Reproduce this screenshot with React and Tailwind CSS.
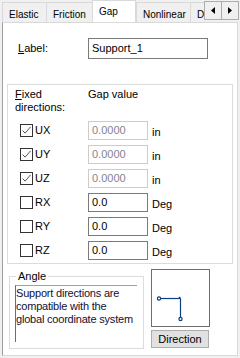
import React from 'react';

const rows = [
  { name: 'UX', checked: true, value: '0.0000', unit: 'in' },
  { name: 'UY', checked: true, value: '0.0000', unit: 'in' },
  { name: 'UZ', checked: true, value: '0.0000', unit: 'in' },
  { name: 'RX', checked: false, value: '0.0', unit: 'Deg' },
  { name: 'RY', checked: false, value: '0.0', unit: 'Deg' },
  { name: 'RZ', checked: false, value: '0.0', unit: 'Deg' },
];

function CheckBox({ checked }) {
  return (
    <div className="w-[13px] h-[13px] border border-[#333333] bg-white shrink-0">
      {checked && (
        <svg width="11" height="11" viewBox="0 0 11 11">
          <polyline points="1.5,5.5 4.2,8.2 9.5,1.8" fill="none" stroke="#555555" strokeWidth="1" />
        </svg>
      )}
    </div>
  );
}

function Tab({ label, width, active }) {
  if (active) {
    return (
      <div className={`${width} h-[23px] -mb-px relative z-10 bg-white border-t border-l border-r border-[#d9d9d9] pl-[6px] pt-[4px] text-[10px] leading-[13px] text-black`}>
        {label}
      </div>
    );
  }
  return (
    <div className={`${width} h-[20px] bg-[#f0f0f0] border-t border-l border-[#d9d9d9] pl-[6px] flex items-end text-[10px] leading-[14px] text-black shrink-0`}>
      {label}
    </div>
  );
}

export default function App() {
  return (
    <div className="w-[240px] h-[358px] bg-[#f0f0f0] overflow-hidden font-['Liberation_Sans',Arial,sans-serif] text-[11px] text-black">
      {/* Tab strip */}
      <div className="flex h-[22px] items-end">
        <div className="flex items-end flex-1 overflow-hidden pl-[2px] h-[22px]">
          <Tab label="Elastic" width="w-[44px]" />
          <Tab label="Friction" width="w-[46px]" />
          <Tab label="Gap" width="w-[44px] shrink-0" active />
          <Tab label="Nonlinear" width="w-[54px]" />
          <Tab label="D" width="w-[16px]" />
        </div>
        <div className="flex self-start mt-[1px] shrink-0 w-[35px] h-[19px] border border-[#adadad] bg-[#f0f0f0] mr-[1px]">
          <div className="w-1/2 flex items-center justify-center border-r border-[#adadad]">
            <svg width="4" height="7" viewBox="0 0 4 7"><polygon points="4,0 4,7 0,3.5" fill="#000" /></svg>
          </div>
          <div className="w-1/2 flex items-center justify-center">
            <svg width="4" height="7" viewBox="0 0 4 7"><polygon points="0,0 0,7 4,3.5" fill="#000" /></svg>
          </div>
        </div>
      </div>

      {/* Panel */}
      <div className="ml-[2px] w-[236px] h-[334px] bg-white border border-[#d9d9d9] border-l-[#a0a0a0]">
        {/* Label */}
        <div className="flex items-center mt-[15px]">
          <div className="w-[85px] pl-[15px]">
            <span className="underline">L</span>abel:
          </div>
          <div className="w-[120px] h-[21px] border border-[#7a7a7a] flex items-center pl-[3px]">Support_1</div>
        </div>

        {/* Fixed directions */}
        <div className="mt-[25px] ml-[4px] w-[226px] border border-[#dcdcdc] pt-[3px] pb-[3px]">
          <div className="flex leading-[13px]">
            <div className="w-[80px] pl-[7px]">
              <span className="underline">F</span>ixed<br />directions:
            </div>
            <div>Gap value</div>
          </div>
          <div className="mt-[7px] flex flex-col gap-[5px]">
            {rows.map((r) => (
              <div key={r.name} className="flex items-center h-[19px]">
                <div className="w-[80px] pl-[12px] flex items-center">
                  <CheckBox checked={r.checked} />
                  <span className="ml-[2px]">{r.name}</span>
                </div>
                <div
                  className={`w-[60px] h-[19px] flex items-center pl-[3px] border ${
                    r.checked ? 'border-[#cccccc] text-[#838391]' : 'border-[#7a7a7a] text-black'
                  }`}
                >
                  {r.value}
                </div>
                <span className="ml-[4px] pt-[3px]">{r.unit}</span>
              </div>
            ))}
          </div>
        </div>

        {/* Angle + Direction */}
        <div className="flex items-start mt-[5px]">
          <fieldset className="ml-[6px] w-[135px] border border-[#dcdcdc] pb-[6px]">
            <legend className="ml-[6px] px-[2px] leading-[14px]">Angle</legend>
            <div className="mt-[2px] ml-[5px] w-[122px] h-[57px] border-t border-t-[#a0a0a0] border-l border-l-[#6d6d6d] pt-[1px] leading-[13px] whitespace-nowrap tracking-[-0.2px] text-[#101030]">
              Support directions are
              <br />
              compatible with the
              <br />
              global coordinate system
            </div>
          </fieldset>
          <div className="ml-[7px] flex flex-col">
            <div className="w-[59px] h-[58px] border border-[#6d6d6d] bg-white">
              <svg width="57" height="56" viewBox="0 0 57 56">
                <g stroke="#0b3f80" strokeWidth="1.2" fill="none">
                  <line x1="8.5" y1="28.5" x2="28.5" y2="28.5" />
                  <line x1="28.5" y1="28.5" x2="28.5" y2="47.5" />
                  <line x1="27" y1="27" x2="28.5" y2="28.5" />
                  <circle cx="7" cy="28.5" r="1.6" fill="white" />
                  <circle cx="28.5" cy="49" r="1.6" fill="white" />
                </g>
              </svg>
            </div>
            <div className="mt-[3px] w-[58px] h-[18px] bg-[#e1e1e1] border border-[#adadad] flex items-center justify-center">
              Direction
            </div>
          </div>
        </div>
      </div>
    </div>
  );
}
